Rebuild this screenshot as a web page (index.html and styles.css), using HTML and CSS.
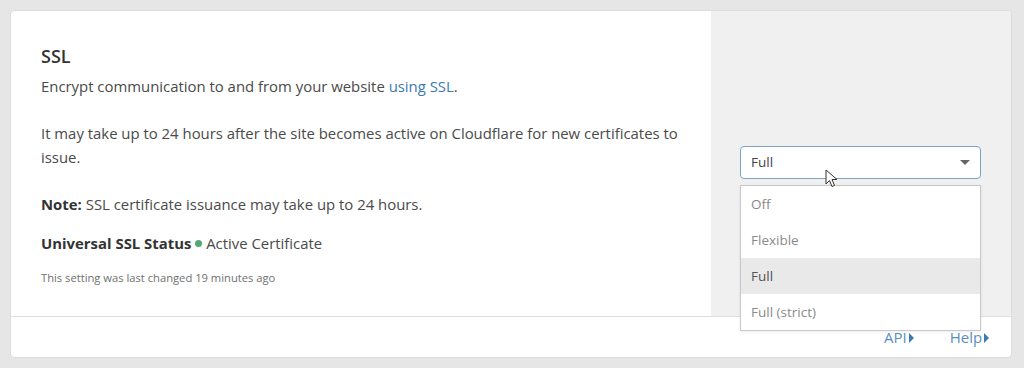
FILE: index.html
```html
<!DOCTYPE html>
<html lang="en">
<head>
    <meta charset="UTF-8">
    <title>SSL</title>
    <link rel="stylesheet" href="styles.css">
</head>
<body>
    <div class="card">
        <div class="card-body">
            <div class="card-main">
                <h3>SSL</h3>
                <p>Encrypt communication to and from your website <a href="#">using SSL</a>.</p>
                <p>It may take up to 24 hours after the site becomes active on Cloudflare for new certificates to issue.</p>
                <p class="note"><strong>Note:</strong> SSL certificate issuance may take up to 24 hours.</p>
                <p class="status"><strong>Universal SSL Status</strong> <span class="dot"></span> Active Certificate</p>
                <p class="changed">This setting was last changed 19 minutes ago</p>
            </div>
            <div class="card-side">
                <div class="select-wrap">
                    <div class="select">
                        <span>Full</span>
                        <span class="caret"></span>
                    </div>
                    <ul class="menu">
                        <li>Off</li>
                        <li>Flexible</li>
                        <li class="active">Full</li>
                        <li>Full (strict)</li>
                    </ul>
                    <svg class="cursor" width="14" height="20" viewBox="0 0 14 20">
                        <path d="M1 1 L1 15 L4.5 11.5 L7 17.5 L9.5 16.5 L7 10.5 L12 10.5 Z" fill="#fff" stroke="#333" stroke-width="1"/>
                    </svg>
                </div>
            </div>
        </div>
        <div class="card-footer">
            <a href="#">API <span class="tri"></span></a>
            <a href="#">Help <span class="tri"></span></a>
        </div>
    </div>
</body>
</html>
```

FILE: styles.css
```css
body {
    margin: 0;
    padding: 10px 12px 11px 10px;
    background-color: #e6e6e7;
    font-family: "Open Sans", "Noto Sans", sans-serif;
    color: #4a4a4a;
}
.card {
    background-color: white;
    border: 1px solid #dcdcdc;
    border-radius: 4px;
}
.card-body {
    display: flex;
    height: 305px;
    border-bottom: 1px solid #dedede;
}
.card-main {
    flex: 1;
    padding: 32px 30px 0 30px;
}
.card-main h3 {
    margin: 0 0 5px 0;
    font-size: 18px;
    font-weight: 600;
    color: #333;
    line-height: 26px;
}
.card-main p {
    margin: 0 0 23px 0;
    font-size: 14.9px;
    line-height: 24px;
}
.card-main a {
    color: #3a7bb0;
    text-decoration: none;
}
.card-main strong {
    font-weight: 700;
    color: #333;
}
.card-main p.note {
    margin-bottom: 15px;
}
.card-main p.status {
    margin-bottom: 15px;
}
.dot {
    display: inline-block;
    width: 7px;
    height: 7px;
    border-radius: 50%;
    background-color: #4faa74;
    vertical-align: 2px;
}
.card-main p.changed {
    font-size: 11.2px;
    color: #707070;
    line-height: 16px;
}
.card-side {
    width: 300px;
    background-color: #f0f0f1;
    display: flex;
    align-items: center;
    padding: 0 30px 0 29px;
    box-sizing: border-box;
    border-top-right-radius: 4px;
}
.select-wrap {
    position: relative;
    width: 100%;
    margin-top: -3px;
}
.select {
    display: flex;
    justify-content: space-between;
    align-items: center;
    height: 31px;
    padding: 0 10px;
    border: 1px solid #7aa3c6;
    border-radius: 4px;
    background-color: white;
    font-size: 13.5px;
    color: #444;
}
.caret {
    width: 0;
    height: 0;
    border-left: 5px solid transparent;
    border-right: 5px solid transparent;
    border-top: 5px solid #666;
}
.menu {
    position: absolute;
    top: 39px;
    left: 0;
    right: 0;
    margin: 0;
    padding: 0;
    list-style: none;
    background-color: white;
    border: 1px solid #c8c8c8;
    box-shadow: 0 1px 3px rgba(0,0,0,0.08);
    z-index: 2;
}
.menu li {
    height: 36px;
    line-height: 36px;
    padding: 0 10px;
    font-size: 13.5px;
    color: #8a8a8a;
}
.menu li.active {
    background-color: #e9e9e9;
    color: #555;
}
.cursor {
    position: absolute;
    left: 85px;
    top: 23px;
    z-index: 3;
}
.card-footer {
    display: flex;
    justify-content: flex-end;
    gap: 36px;
    height: 40px;
    align-items: center;
    padding: 0 22px 0 0;
}
.card-footer a {
    color: #5a8fbd;
    text-decoration: none;
    font-size: 15px;
}
.tri {
    display: inline-block;
    width: 0;
    height: 0;
    border-top: 5px solid transparent;
    border-bottom: 5px solid transparent;
    border-left: 5px solid #3d7ab3;
    margin-left: -2px;
}
```
